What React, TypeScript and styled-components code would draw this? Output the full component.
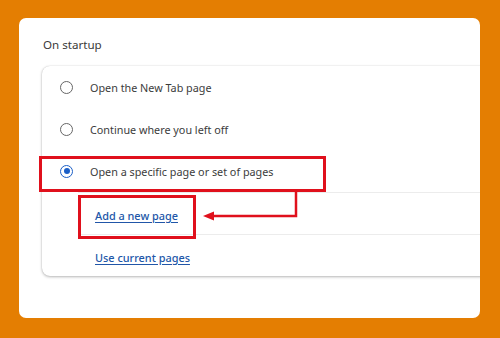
import React from 'react';
import styled, { createGlobalStyle } from 'styled-components';

const GlobalStyle = createGlobalStyle`
  html, body {
    margin: 0;
    padding: 0;
    background: #e47e02;
  }
  body {
    font-family: 'Noto Sans', 'Open Sans', sans-serif;
  }
`;

type RadioOption = {
  label: string;
  checked: boolean;
};

const options: RadioOption[] = [
  { label: 'Open the New Tab page', checked: false },
  { label: 'Continue where you left off', checked: false },
  { label: 'Open a specific page or set of pages', checked: true },
];

const links = ['Add a new page', 'Use current pages'];

const App: React.FC = () => {
  return (
    <>
      <GlobalStyle />
      <Page>
        <Panel>
          <Title>On startup</Title>
          <Card>
            {options.map((o) => (
              <OptionRow key={o.label}>
                <Radio $checked={o.checked} />
                <OptionLabel>{o.label}</OptionLabel>
              </OptionRow>
            ))}
            {links.map((l) => (
              <LinkRow key={l}>
                <PageLink href="#">{l}</PageLink>
              </LinkRow>
            ))}
          </Card>

          <HighlightBox $left={20} $top={138} $width={287} $height={36} />
          <HighlightBox $left={59} $top={177} $width={118} $height={44} />
          <Arrow width="461" height="300" viewBox="0 0 461 300">
            <polyline
              points="277,173 277,198 194,198"
              fill="none"
              stroke="#e0101c"
              strokeWidth="2.5"
            />
            <polygon points="184,198 195,193.5 195,202.5" fill="#e0101c" />
          </Arrow>
        </Panel>
      </Page>
    </>
  );
};

const Page = styled.div`
  width: 500px;
  height: 338px;
  box-sizing: border-box;
  padding: 18px 20px 20px 19px;
  display: flex;
`;

const Panel = styled.div`
  position: relative;
  width: 461px;
  height: 300px;
  box-sizing: border-box;
  background: #ffffff;
  border-radius: 7px;
  overflow: hidden;
  padding: 17px 0 0 23px;
  display: flex;
  flex-direction: column;
`;

const Title = styled.div`
  font-size: 11.6px;
  line-height: 20px;
  color: #3a3a3a;
  margin: 0 0 11px 1px;
`;

const Card = styled.div`
  width: 470px;
  background: #ffffff;
  border-radius: 8px 0 0 8px;
  box-shadow: 0 1px 3px rgba(0, 0, 0, 0.28), 0 0 1px rgba(0, 0, 0, 0.2);
  display: flex;
  flex-direction: column;
`;

const OptionRow = styled.div`
  height: 42px;
  display: flex;
  align-items: center;
  padding-left: 18px;
  gap: 17px;
`;

const Radio = styled.span<{ $checked: boolean }>`
  width: 13px;
  height: 13px;
  box-sizing: border-box;
  border-radius: 50%;
  border: 1.6px solid ${(p) => (p.$checked ? '#1b5fc7' : '#666666')};
  display: flex;
  align-items: center;
  justify-content: center;
  &::after {
    content: '';
    width: 6px;
    height: 6px;
    border-radius: 50%;
    background: ${(p) => (p.$checked ? '#1b5fc7' : 'transparent')};
  }
`;

const OptionLabel = styled.span`
  font-size: 10.8px;
  color: #3c3c3c;
`;

const LinkRow = styled.div`
  height: 42px;
  box-sizing: border-box;
  display: flex;
  align-items: center;
  margin-left: 36px;
  padding: 3px 0 0 17px;
  border-top: 1px solid #ececec;
`;

const PageLink = styled.a`
  font-size: 10.9px;
  font-weight: 500;
  color: #2156a8;
  text-decoration: underline;
  text-underline-offset: 2px;
`;

const HighlightBox = styled.div<{ $left: number; $top: number; $width: number; $height: number }>`
  position: absolute;
  left: ${(p) => p.$left}px;
  top: ${(p) => p.$top}px;
  width: ${(p) => p.$width}px;
  height: ${(p) => p.$height}px;
  box-sizing: border-box;
  border: 3px solid #e0101c;
`;

const Arrow = styled.svg`
  position: absolute;
  left: 0;
  top: 0;
  pointer-events: none;
`;

export default App;
